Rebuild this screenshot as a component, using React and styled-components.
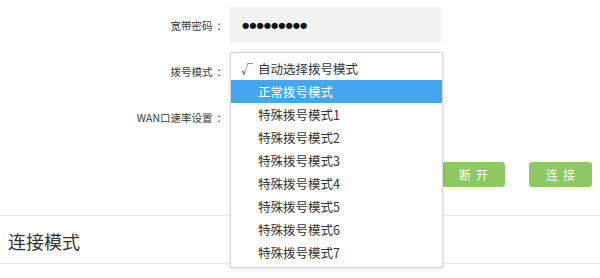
import React from 'react';
import styled, { createGlobalStyle } from 'styled-components';

const GlobalStyle = createGlobalStyle`
  html, body {
    margin: 0;
    padding: 0;
    background: #fff;
  }
  body {
    font-family: "Noto Sans CJK SC", "Noto Sans", sans-serif;
    color: #333;
  }
`;

const modes = [
  '自动选择拨号模式',
  '正常拨号模式',
  '特殊拨号模式1',
  '特殊拨号模式2',
  '特殊拨号模式3',
  '特殊拨号模式4',
  '特殊拨号模式5',
  '特殊拨号模式6',
  '特殊拨号模式7',
];

const Page = styled.div`
  width: 600px;
  height: 278px;
  overflow: hidden;
  position: relative;
`;

const Form = styled.div`
  display: grid;
  grid-template-columns: 222px 211px;
  grid-auto-rows: 36px;
  column-gap: 8px;
  row-gap: 10px;
  padding-top: 7px;
  align-items: center;
`;

const Label = styled.label`
  font-size: 10.5px;
  text-align: right;
  color: #3a3a3a;
  white-space: nowrap;
  span {
    margin-left: 4px;
    margin-right: -5px;
  }
`;

const Field = styled.div`
  position: relative;
  height: 36px;
  background: ${(p) => (p.$filled ? '#f2f2f2' : 'transparent')};
  display: flex;
  align-items: center;
  padding-left: 12px;
  box-sizing: border-box;
`;

const Dots = styled.span`
  font-family: "DejaVu Sans", sans-serif;
  font-size: 8.2px;
  letter-spacing: 0.1px;
  color: #111;
`;

const Menu = styled.ul`
  position: absolute;
  top: -1px;
  left: 0;
  width: 211px;
  margin: 0;
  padding: 4px 0 3px;
  list-style: none;
  background: #fff;
  border: 1px solid #d6d6d6;
  box-shadow: 0 1px 4px rgba(0, 0, 0, 0.12);
  z-index: 10;
`;

const Item = styled.li`
  display: flex;
  align-items: center;
  height: 23px;
  padding-left: 10px;
  font-size: 12.5px;
  color: ${(p) => (p.$active ? '#fff' : '#333')};
  background: ${(p) => (p.$active ? '#43a6ee' : 'transparent')};
`;

const Check = styled.span`
  width: 17px;
  font-size: 12px;
`;

const Buttons = styled.div`
  display: flex;
  justify-content: flex-end;
  gap: 24px;
  padding-right: 8px;
  margin-top: 27px;
`;

const Button = styled.button`
  width: 63px;
  height: 25px;
  border: none;
  border-radius: 3px;
  background: #8dc862;
  color: #fff;
  font-family: "Noto Sans CJK SC", sans-serif;
  font-size: 12px;
  letter-spacing: 5px;
  padding: 0 0 0 5px;
`;

const Section = styled.div`
  margin-top: 28px;
  height: 49px;
  border-top: 1px solid #e8e8e8;
  border-bottom: 1px solid #e8e8e8;
  display: flex;
  align-items: center;
  padding: 3px 0 0 8px;
  box-sizing: border-box;
  font-size: 18px;
  color: #333;
`;

export default function App() {
  return (
    <Page>
      <GlobalStyle />
      <Form>
        <Label>宽带密码<span>：</span></Label>
        <Field $filled>
          <Dots>●●●●●●●●●</Dots>
        </Field>
        <Label>拨号模式<span>：</span></Label>
        <Field>
          <Menu>
            {modes.map((m, i) => (
              <Item key={m} $active={i === 1}>
                <Check>{i === 0 ? '√' : ''}</Check>
                {m}
              </Item>
            ))}
          </Menu>
        </Field>
        <Label>WAN口速率设置<span>：</span></Label>
        <Field />
      </Form>
      <Buttons>
        <Button>断开</Button>
        <Button>连接</Button>
      </Buttons>
      <Section>连接模式</Section>
    </Page>
  );
}
